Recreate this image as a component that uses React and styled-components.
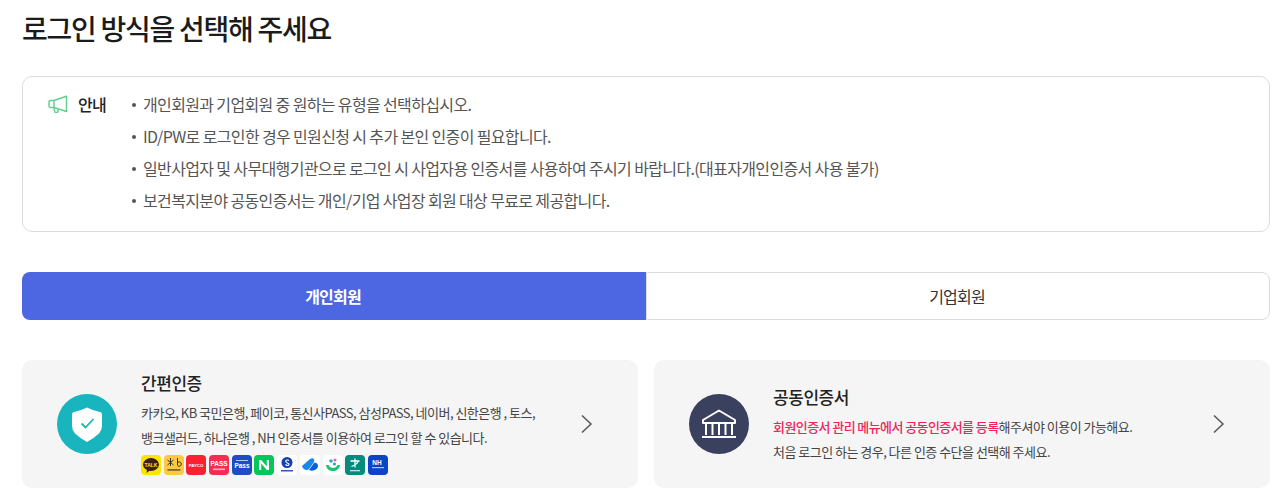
import React from "react";
import styled, { createGlobalStyle } from "styled-components";

const Global = createGlobalStyle`
  html, body { margin: 0; padding: 0; background: #fff; }
  body { font-family: "Noto Sans CJK KR", "Noto Sans", sans-serif; color: #222; }
  * { box-sizing: border-box; }
`;
const Page = styled.div`
  width: 1285px; height: 498px; overflow: hidden;
  padding: 9px 15px 0 22px;
  display: flex; flex-direction: column;
`;
const Title = styled.h1`
  margin: 0; height: 38px; line-height: 38px;
  font-size: 28px; font-weight: 500; letter-spacing: -1.27px; color: #1b1b1b;
`;
const Notice = styled.div`
  margin-top: 29px; height: 156px;
  border: 1px solid #dcdcdc; border-radius: 10px;
  padding: 11px 0 0 25px; display: flex;
`;
const NoticeHead = styled.div`
  width: 83px; height: 32px; display: flex; align-items: center; gap: 10px;
  font-size: 16px; font-weight: 500; color: #222; letter-spacing: -0.8px;
`;
const NoticeList = styled.ul`
  list-style: none; margin: 0; padding: 0;
`;
const NoticeItem = styled.li`
  height: 32px; line-height: 32px; font-size: 16px; color: #555; letter-spacing: -0.64px;
  padding-left: 12px; position: relative;
  &::before {
    content: ""; position: absolute; left: 1px; top: 15px; width: 4px; height: 4px;
    border-radius: 50%; background: #555;
  }
`;
const Tabs = styled.div`
  margin-top: 40px; height: 48px; display: grid; grid-template-columns: 624px 624px;
`;
const Tab = styled.div`
  display: flex; align-items: center; justify-content: center; padding: 0 2px 1px 0;
  font-size: 16px; letter-spacing: -0.8px;
  font-weight: ${p => (p.$active ? 700 : 400)};
  color: ${p => (p.$active ? "#fff" : "#333")};
  background: ${p => (p.$active ? "#4d66e1" : "#fff")};
  border: ${p => (p.$active ? "none" : "1px solid #dcdcdc")};
  border-radius: ${p => (p.$active ? "8px 0 0 8px" : "0 8px 8px 0")};
`;
const Cards = styled.div`
  margin-top: 40px; display: grid; grid-template-columns: 616px 616px; gap: 16px;
`;
const Card = styled.div`
  height: 128px; background: #f5f5f5; border-radius: 10px;
  display: flex; align-items: center; padding: 0 44px 0 35px;
`;
const Badge = styled.div`
  width: 60px; height: 60px; border-radius: 50%; flex: none;
  background: ${p => p.$color};
  display: flex; align-items: center; justify-content: center;
`;
const Body = styled.div`
  margin-left: 24px; flex: 1; min-width: 0;
  padding-top: ${p => p.$nudge || 0}px;
`;
const CardTitle = styled.div`
  font-size: 17px; font-weight: 500; color: #222; line-height: 20px; letter-spacing: -0.45px;
  margin-bottom: 7px;
`;
const Line = styled.div`
  font-size: 13px; line-height: 25px; color: #444; letter-spacing: -0.52px; white-space: nowrap;
`;
const Red = styled.span`
  color: #f0245c; font-weight: 500; letter-spacing: -0.58px;
`;
const Logos = styled.div`
  display: flex; gap: 2.7px; margin-top: 5px;
`;
const Logo = styled.div`
  width: 20px; height: 20px; border-radius: 4px; overflow: hidden; flex: none;
  background: ${p => p.$bg};
  svg { display: block; }
`;
const LogoText = styled.text`
  font-family: "Liberation Sans", sans-serif; font-weight: 700; text-anchor: middle;
`;
const Chevron = () => (
  <svg width="14" height="20" viewBox="0 0 14 20" fill="none" stroke="#555" strokeWidth="1.5" style={{ flex: "none" }}>
    <path d="M2 1.5 L11 10 L2 18.5" />
  </svg>
);

const logos = [
  ["#fee500", <><ellipse cx="10" cy="9.5" rx="8" ry="6.5" fill="#3c1e1e" /><path d="M6 14l-.5 4 4-3z" fill="#3c1e1e" /><LogoText x="10" y="11.5" fontSize="5" fill="#fee500">TALK</LogoText></>],
  ["#fcc940", <><path d="M6.500 3v8M3.500 5l6 5M9.500 5l-6 5" stroke="#333" strokeWidth="1" /><path d="M13.500 3v7M13.500 7.500a2.200 2.200 0 1 1-.1 3" stroke="#333" strokeWidth="1" fill="none" /><rect x="3.500" y="14" width="13" height="1.800" fill="#7a6a2c" /></>],
  ["#fb2130", <LogoText x="10" y="11.500" fontSize="4.300" fill="#fff">PAYCO</LogoText>],
  ["#f62c52", <><LogoText x="10" y="10.500" fontSize="6.500" fill="#fff">PASS</LogoText><rect x="4" y="13.500" width="12" height="1.600" fill="#ffb7c6" /></>],
  ["#1f4bc4", <><rect x="4" y="5" width="12" height="1" fill="#b9c9f4" /><LogoText x="10" y="13" fontSize="6.500" fill="#fff">Pass</LogoText></>],
  ["#03c75a", <path d="M5 15V5h2.200l5.600 6.500V5H15v10h-2.200L7.200 8.500V15z" fill="#fff" />],
  ["#ffffff", <><circle cx="10" cy="7.500" r="5.500" fill="#1540ad" /><path d="M12 5.500c-2-1.200-4 0-3 1.500s3.500 1 3 2.500-2.500 1-3.500 0" stroke="#fff" strokeWidth="1.100" fill="none" /><rect x="4" y="15" width="12" height="1.500" fill="#2b57b8" /></>],
  ["#ffffff", <><path d="M2 11 L10 4 c3-2 5 0 4 3 L9 14 c-2 2-6 1-7-3z" fill="#1a87f0" /><path d="M9 15 l5-7 c2-1 4 1 4 3 c0 3-5 6-9 4z" fill="#0062df" /></>],
  ["#ffffff", <><path d="M3 10c1 8 13 8 14 0l-2.600 0c-1 4-7.800 4-8.800 0z" fill="#16c36e" /><circle cx="8" cy="6" r="1.800" fill="#2aa7dc" /><circle cx="12" cy="5" r="1.500" fill="#e9609a" /><circle cx="11.500" cy="9" r="1.600" fill="#17b5a6" /></>],
  ["#058a7c", <><path d="M5.500 6h9M10 3.500v9M6.500 11.500c3-1 5.500-2.500 6.500-5" stroke="#fff" strokeWidth="1.300" fill="none" /><rect x="5" y="15" width="10" height="1.300" fill="#bde3de" /></>],
  ["#0a46c4", <><LogoText x="9" y="9.500" fontSize="6.500" fill="#fff">NH</LogoText><rect x="4" y="12" width="12" height="1.200" fill="#a9c3f5" /></>],
];

export default function App() {
  return (
    <Page>
      <Global />
      <Title>로그인 방식을 선택해 주세요</Title>
      <Notice>
        <NoticeHead>
          <svg width="20" height="18" viewBox="0 0 20 18" fill="none" stroke="#62d08f" strokeWidth="1.500" strokeLinejoin="round">
            <path d="M18.500 1.200 V16.500 L6 12.500 H2.500 a1.500 1.500 0 0 1-1.500-1.500 V7 a1.500 1.500 0 0 1 1.500-1.500 H6z" />
            <path d="M6 5.500 V12.500 M6 13 L6.500 16 a1.800 1.800 0 0 0 3.600-.5 V14.200" />
          </svg>
          안내
        </NoticeHead>
        <NoticeList>
          <NoticeItem>개인회원과 기업회원 중 원하는 유형을 선택하십시오.</NoticeItem>
          <NoticeItem>ID/PW로 로그인한 경우 민원신청 시 추가 본인 인증이 필요합니다.</NoticeItem>
          <NoticeItem>일반사업자 및 사무대행기관으로 로그인 시 사업자용 인증서를 사용하여 주시기 바랍니다.(대표자개인인증서 사용 불가)</NoticeItem>
          <NoticeItem>보건복지분야 공동인증서는 개인/기업 사업장 회원 대상 무료로 제공합니다.</NoticeItem>
        </NoticeList>
      </Notice>
      <Tabs>
        <Tab $active>개인회원</Tab>
        <Tab>기업회원</Tab>
      </Tabs>
      <Cards>
        <Card>
          <Badge $color="#19b5bf">
            <svg width="30" height="35" viewBox="0 0 30 35">
              <path d="M15 0.500 Q22 4 28 5 Q30 5.400 30 7.500 V19 Q30 23 27 26.500 Q21 32 15 35 Q9 32 3 26.500 Q0 23 0 19 V7.500 Q0 5.400 2 5 Q8 4 15 0.500z" fill="#fff" />
              <path d="M9.500 16.500 L13.500 20.500 L21.500 12" fill="none" stroke="#19b5bf" strokeWidth="1.800" />
            </svg>
          </Badge>
          <Body>
            <CardTitle>간편인증</CardTitle>
            <Line>카카오, KB 국민은행, 페이코, 통신사PASS, 삼성PASS, 네이버, 신한은행 , 토스,</Line>
            <Line>뱅크샐러드, 하나은행 , NH 인증서를 이용하여 로그인 할 수 있습니다.</Line>
            <Logos>
              {logos.map(([bg, art], i) => (
                <Logo key={i} $bg={bg}>
                  <svg width="20" height="20" viewBox="0 0 20 20">{art}</svg>
                </Logo>
              ))}
            </Logos>
          </Body>
          <Chevron />
        </Card>
        <Card>
          <Badge $color="#39415e">
            <svg width="36" height="30" viewBox="0 0 36 30" fill="none" stroke="#fff" strokeWidth="2">
              <path d="M2 11 L18 1.500 L34 11 V14 H2z" strokeLinejoin="round" />
              <path d="M5 14V26M11.500 14V26M18 14V26M24.500 14V26M31 14V26" />
              <path d="M1 28H35" strokeWidth="2.200" />
            </svg>
          </Badge>
          <Body $nudge={3}>
            <CardTitle>공동인증서</CardTitle>
            <Line><Red>회원인증서 관리 메뉴에서 공동인증서를 등록</Red>해주셔야 이용이 가능해요.</Line>
            <Line>처음 로그인 하는 경우, 다른 인증 수단을 선택해 주세요.</Line>
          </Body>
          <Chevron />
        </Card>
      </Cards>
    </Page>
  );
}
